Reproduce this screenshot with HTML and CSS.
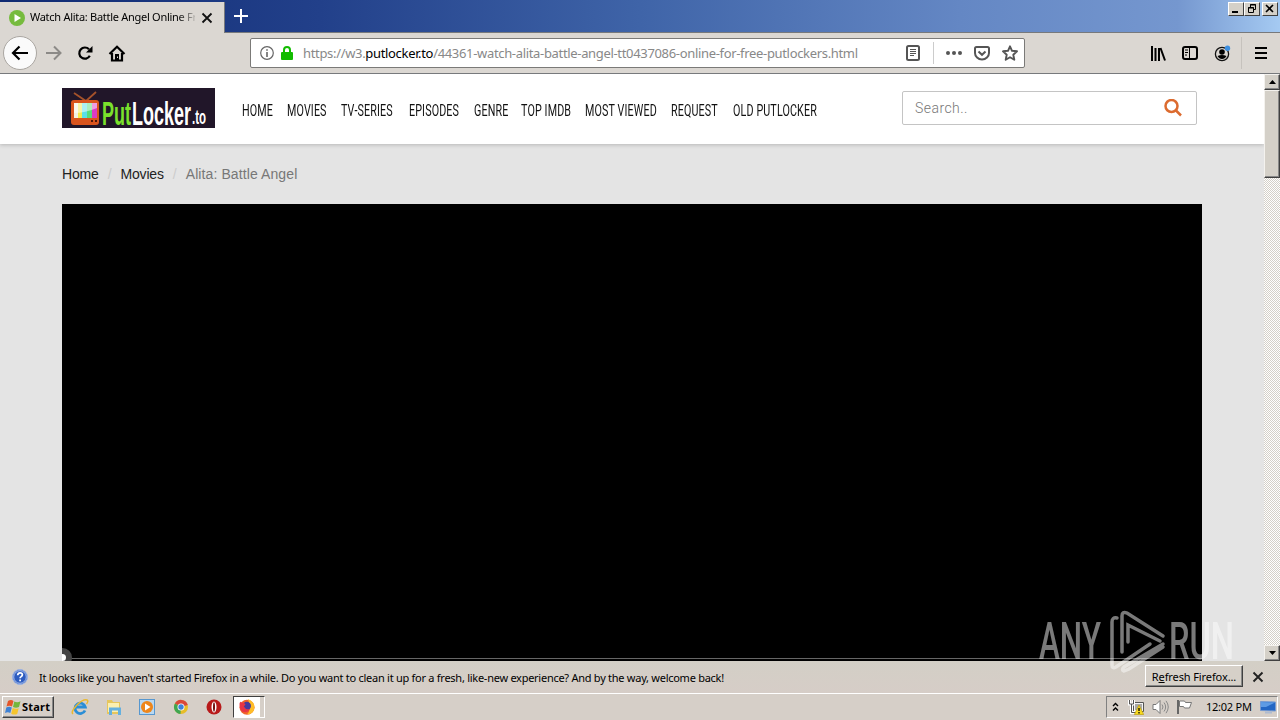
FILE: index.html
```html
<!DOCTYPE html>
<html lang="en">
<head>
	<meta charset="UTF-8">
	<title>Watch Alita: Battle Angel Online Free</title>
	<link rel="stylesheet" href="styles.css">
</head>
<body>
	<div class="titlebar">
		<div class="tab">
			<svg class="favicon" width="16" height="16" viewBox="0 0 16 16"><circle cx="8" cy="8" r="8" fill="#76bb3d"/><path d="M5.5 4l6.5 4-6.5 4z" fill="#fff"/></svg>
			<span class="tab_title">Watch Alita: Battle Angel Online Fr</span>
			<svg width="12" height="12" viewBox="0 0 12 12"><path d="M1.5 1.5l9 9M10.5 1.5l-9 9" stroke="#111" stroke-width="1.8"/></svg>
		</div>
		<svg class="new_tab" width="14" height="14" viewBox="0 0 14 14"><path d="M7 0v14M0 7h14" stroke="#fff" stroke-width="2"/></svg>
		<div class="win_btns">
			<div class="win_btn"><svg width="13" height="11" viewBox="0 0 13 11"><path d="M3 9h6" stroke="#000" stroke-width="2"/></svg></div>
			<div class="win_btn"><svg width="13" height="11" viewBox="0 0 13 11"><path d="M5.500 4V1.500h5v5H9M5 2h6M3.500 4.500h5v5h-5zM3 5h6" fill="none" stroke="#000"/></svg></div>
			<div class="win_btn close"><svg width="13" height="11" viewBox="0 0 13 11"><path d="M3 2l7 7M10 2l-7 7" stroke="#000" stroke-width="1.600"/></svg></div>
		</div>
	</div>

	<div class="toolbar">
		<div class="nav_btns">
			<div class="back"><svg width="18" height="16" viewBox="0 0 18 16"><path d="M17 8H2M8.500 1.500L2 8l6.500 6.500" fill="none" stroke="#000" stroke-width="2.200"/></svg></div>
			<svg width="17" height="16" viewBox="0 0 17 16"><path d="M1 8h14M9 1.500L15.500 8 9 14.500" fill="none" stroke="#8c8a87" stroke-width="2"/></svg>
			<svg width="16" height="16" viewBox="0 0 16 16"><path d="M12.800 10.800A5.600 5.600 0 1 1 12 4.300" fill="none" stroke="#000" stroke-width="2.200"/><path d="M15.500 1v6.500H9z"/></svg>
			<svg width="18" height="17" viewBox="0 0 18 17"><path d="M1.500 9L9 1.800 16.500 9M4 8v7.500h10V8" fill="none" stroke="#000" stroke-width="2.200"/><path d="M7 9h4v7H7z"/><path d="M9 11.500h1V13H9z" fill="#dbd7d2"/></svg>
		</div>
		<div class="urlbar">
			<svg width="14" height="14" viewBox="0 0 14 14"><circle cx="7" cy="7" r="6.300" fill="none" stroke="#666" stroke-width="1.200"/><path d="M7 6v5M7 3.200v1.600" stroke="#666" stroke-width="1.600"/></svg>
			<svg class="lock" width="12" height="14" viewBox="0 0 12 14"><path d="M3 7V4a3 3 0 0 1 6 0v3" fill="none" stroke="#12bc00" stroke-width="2"/><rect y="6" width="12" height="8" rx="1" fill="#12bc00"/></svg>
			<div class="url">https://w3.<b>putlocker.to</b>/44361-watch-alita-battle-angel-tt0437086-online-for-free-putlockers.html</div>
			<svg class="reader" width="14" height="16" viewBox="0 0 14 16"><rect x="1" y="1" width="12" height="14" rx="1.500" fill="none" stroke="#555" stroke-width="2"/><path d="M4 4.500h6M4 6.500h6M4 8.500h6M4 10.500h4" stroke="#555"/></svg>
			<div class="url_line"></div>
			<svg class="dots" width="16" height="4" viewBox="0 0 16 4"><g fill="#555"><circle cx="2" cy="2" r="2"/><circle cx="8" cy="2" r="2"/><circle cx="14" cy="2" r="2"/></g></svg>
			<svg class="pocket" width="16" height="15" viewBox="0 0 16 15"><path d="M1 2.500Q1 1 2.500 1h11Q15 1 15 2.500V7a7 6.500 0 0 1-14 0z" fill="none" stroke="#555" stroke-width="2"/><path d="M4.500 5.500L8 8.800l3.500-3.300" fill="none" stroke="#555" stroke-width="2"/></svg>
			<svg class="star" width="16" height="16" viewBox="0 0 16 16"><path d="M8 1.300l2 4.500 5 .5-3.700 3.400 1 5L8 12.200l-4.300 2.500 1-5L1 6.300l5-.5z" fill="none" stroke="#555" stroke-width="1.900" stroke-linejoin="round"/></svg>
		</div>
		<div class="tools">
			<svg width="16" height="15" viewBox="0 0 16 15"><path d="M2 0v15M5.500 2v13M9 2v13M10.500 2L15 14.500" stroke="#000" stroke-width="2"/></svg>
			<svg width="16" height="14" viewBox="0 0 16 14"><rect x="1" y="1" width="14" height="12" rx="2" fill="none" stroke="#000" stroke-width="2"/><path d="M7.500 1v12M3 4h3M3 6.500h3M3 9h2" stroke="#000"/></svg>
			<svg width="17" height="17" viewBox="0 0 17 17"><circle cx="8" cy="9" r="6.600" fill="none" stroke="#111" stroke-width="1.300"/><circle cx="8" cy="7" r="2.800"/><path d="M3.500 11q4.500-2 9 0-1.500 3-4.500 3t-4.500-3z"/><circle cx="13.500" cy="3.300" r="2.700" fill="#3d8fe0"/></svg>
			<div class="tools_line"></div>
			<svg width="12" height="12" viewBox="0 0 12 12"><path d="M0 1h12M0 6h12M0 11h12" stroke="#000" stroke-width="2"/></svg>
		</div>
	</div>

	<div class="view">
		<div class="page">
			<div class="header">
				<svg class="logo" width="153" height="40" viewBox="0 0 153 40">
					<rect width="153" height="40" fill="#211629"/>
					<path d="M12 5l12 8L34 4" fill="none" stroke="#a5522a" stroke-width="1.800"/>
					<rect x="9" y="12" width="28" height="25" rx="3" fill="#d9541d"/>
					<path d="M12 15h4v15h-4z" fill="#f4efe0"/><path d="M16 15h4v15h-4z" fill="#f5e94e"/><path d="M20 15h5v15h-5z" fill="#59e0e6"/><path d="M25 15h5v15h-5z" fill="#58dc7a"/><path d="M30 15h5v15h-5z" fill="#dc3bc4"/>
					<path d="M12 15h23v5q-12 5-23 5z" fill="#fff" opacity=".5"/>
					<path d="M29 33h2M33 33h2" stroke="#4d160a" stroke-width="2"/>
					<text class="logo_text" x="40" y="37" font-size="34" textLength="29" lengthAdjust="spacingAndGlyphs" fill="#7be12c">Put</text>
					<text class="logo_text" x="70" y="37" font-size="34" textLength="59" lengthAdjust="spacingAndGlyphs" fill="#fff">Locker</text>
					<text class="logo_text" x="130" y="36" font-size="20" textLength="14" lengthAdjust="spacingAndGlyphs" fill="#fff">.to</text>
				</svg>
				<ul class="menu">
					<li>HOME</li>
					<li>MOVIES</li>
					<li>TV-SERIES</li>
					<li>EPISODES</li>
					<li>GENRE</li>
					<li>TOP IMDB</li>
					<li>MOST VIEWED</li>
					<li>REQUEST</li>
					<li>OLD PUTLOCKER</li>
				</ul>
				<div class="search">
					<span>Search..</span>
					<svg width="18" height="18" viewBox="0 0 18 18"><circle cx="7.500" cy="7" r="6" fill="none" stroke="#dc6b2f" stroke-width="2.500"/><path d="M11.500 11l5.500 5.500" stroke="#dc6b2f" stroke-width="2.500"/></svg>
				</div>
			</div>
			<div class="crumbs"><span>Home</span><i>/</i><span>Movies</span><i>/</i><span class="now">Alita: Battle Angel</span></div>
			<div class="player"><div class="progress"></div><div class="knob"></div></div>
		</div>
		<div class="scrollbar">
			<div class="scroll_btn"><svg width="7" height="4" viewBox="0 0 7 4"><path d="M0 4l3.500-4L7 4z"/></svg></div>
			<div class="thumb"></div>
			<div class="scroll_btn down"><svg width="7" height="4" viewBox="0 0 7 4"><path d="M0 0l3.500 4L7 0z"/></svg></div>
		</div>
	</div>

	<div class="notice">
		<svg width="16" height="16" viewBox="0 0 16 16"><circle cx="8" cy="8" r="7.500" fill="#2d5cc0" stroke="#9db4e4"/><circle cx="8" cy="8" r="6.300" fill="none" stroke="#dbe5fa" stroke-width=".7"/><path d="M5.700 6.200q.2-2.400 2.400-2.400t2.300 2q0 1.200-1.400 1.900-.9.400-.9 1.500M8.100 10.600v1.600" fill="none" stroke="#fff" stroke-width="1.700"/></svg>
		<span class="notice_text">It looks like you haven't started Firefox in a while. Do you want to clean it up for a fresh, like-new experience? And by the way, welcome back!</span>
		<div class="refresh"><span>R<u>e</u>fresh Firefox...</span></div>
		<svg class="notice_close" width="12" height="12" viewBox="0 0 12 12"><path d="M1.500 1.500l9 9M10.500 1.500l-9 9" stroke="#222" stroke-width="1.900"/></svg>
	</div>

	<div class="taskbar">
		<div class="start">
			<svg width="17" height="16" viewBox="0 0 17 16"><path d="M3 2q3-2 5.500 0L7 7.500q-2.500-1.500-5.500 0z" fill="#e5562a"/><path d="M9.300 2.500q3 1.600 6.200-.2L14 8q-3 1.400-6 0z" fill="#74b63c"/><path d="M1.300 8.500q3-1.500 5.500.1L5.300 14q-2.500-1.500-5.300 0z" fill="#3f82d5"/><path d="M7.700 9q3 1.500 6 .2L12.200 15q-3 1.300-6-.3z" fill="#f5c52c"/></svg>
			<span>Start</span>
		</div>
		<div class="quick">
			<svg width="18" height="18" viewBox="0 0 18 18"><path d="M14 12.500A5.200 5.200 0 1 1 14.300 9H5" fill="none" stroke="#2b8ed6" stroke-width="2.800"/><path d="M2 16Q-.5 14 5.500 7.500 12 1 16 2q1.800 1-.5 4" fill="none" stroke="#eab830" stroke-width="1.500"/></svg>
			<svg width="18" height="18" viewBox="0 0 18 18"><path d="M2 2h5l1 2h7v12H2z" fill="#e6c65c"/><path d="M3 5h11v9H3z" fill="#fbefb0"/><path d="M4 9.500h12V17h-3v-4.500H7V17H4z" fill="#64b0df"/></svg>
			<svg width="18" height="18" viewBox="0 0 18 18"><rect x="1.500" y="1.500" width="15" height="15" fill="#b9d8f1" stroke="#5797cf"/><circle cx="9" cy="9" r="6" fill="#ee861b"/><path d="M7 5.500l5.500 3.500L7 12.500z" fill="#fff"/></svg>
			<svg width="18" height="18" viewBox="0 0 18 18"><circle cx="9" cy="9" r="7" fill="#e7bd28"/><path d="M9 9L2.900 5.500A7 7 0 0 1 15.800 7z" fill="#d9483a"/><path d="M9 9L2.900 5.500A7 7 0 0 0 8.500 16z" fill="#40a651"/><circle cx="9" cy="9" r="3.500" fill="#fff"/><circle cx="9" cy="9" r="2.700" fill="#3c82db"/></svg>
			<svg width="18" height="18" viewBox="0 0 18 18"><circle cx="9" cy="9" r="7.500" fill="#b81a1a"/><ellipse cx="9" cy="9" rx="2.500" ry="5.500" fill="#fff"/><ellipse cx="9" cy="9" rx="1" ry="4.700" fill="#741010"/></svg>
		</div>
		<div class="task_on"><svg width="18" height="18" viewBox="0 0 18 18"><circle cx="9" cy="9.300" r="7.500" fill="#f0632b"/><path d="M10 1q7 3 6.500 9-1 6-7.500 6.500 5-5 1-15.500z" fill="#ffbd28"/><circle cx="8.800" cy="8" r="4.200" fill="#463a9d"/><path d="M1.600 5Q3 3 3.500 4.500 6 4 7.500 6.500L5.800 8.500q2 3.700 6.200 2.500-3 5-8 2.500Q1 10 1.600 5z" fill="#e73545"/></svg></div>
		<div class="tray">
			<svg width="7" height="10" viewBox="0 0 7 10"><path d="M1 4l2.500-2.500L6 4M1 8.500L3.500 6 6 8.500" fill="none" stroke="#000" stroke-width="1.400"/></svg>
			<svg class="net" width="16" height="16" viewBox="0 0 16 16"><path d="M5.500 3.500h10v9h-10z" fill="#f5f5f5" stroke="#555"/><path d="M7 5h7v6H7z" fill="#aaa"/><path d="M1.500 1v4h4V1M3.500 5v8.500h5" fill="none" stroke="#fff" stroke-width="3"/><path d="M1.500 1v4h4V1M3.500 5v8.500h5" fill="none" stroke="#555"/><path d="M11 6l4.700 9.500H6.300z" fill="#f7d920" stroke="#b39300" stroke-width=".6"/><path d="M11 9v3M11 13v1.500" stroke="#000" stroke-width="1.300"/></svg>
			<svg class="sound" width="17" height="16" viewBox="0 0 17 16"><path d="M1 5.500h3l4-4v13l-4-4H1z" fill="#fff" stroke="#777"/><path d="M10 5.500q2 2.500 0 5M12 3.500q3.300 4.500 0 9M14 1.800q4.500 6.200 0 12.400" fill="none" stroke="#888"/></svg>
			<svg class="flag" width="17" height="16" viewBox="0 0 17 16"><path d="M2 1v14" stroke="#666" stroke-width="2"/><path d="M3.500 2h5l1 1.500h6L13.500 9H8.500l-1-1.500h-4z" fill="#fff" stroke="#777"/></svg>
			<span class="clock">12:02 PM</span>
			<svg class="desk" width="16" height="14" viewBox="0 0 16 14"><path d="M.5 1.500l15 .5v9l-15-.5z" fill="#2467c4" stroke="#789bd0"/><path d="M1 2l14 .5-9 4.500H1z" fill="#5e9be4"/><path d="M5 12.500h7" stroke="#aebbd0" stroke-width="2"/></svg>
		</div>
	</div>

	<svg class="watermark" width="200" height="66" viewBox="0 0 200 66">
		<text class="mark_text" x="3" y="50" textLength="62" lengthAdjust="spacingAndGlyphs">ANY</text>
		<text class="mark_text" x="133" y="50" textLength="65" lengthAdjust="spacingAndGlyphs">RUN</text>
		<path d="M81 9q-5-1-5 4v43q0 4 4 2L114 35M86 43V7q0-5 5-3L127 27M92 33V16l32 16M127 35L88 58q-3 3 0 4l5-2L127 38" fill="none" stroke="#fff" stroke-width="3.500" stroke-linecap="round"/>
	</svg>
</body>
</html>
```
FILE: styles.css
```css
*{margin: 0; padding: 0; box-sizing: border-box;}
li{list-style: none;}
svg{display: block; flex: none;}
body{
	width: 1280px;
	height: 720px;
	overflow: hidden;
	display: flex;
	flex-direction: column;
	font: 11px "Noto Sans", sans-serif;
	color: #000;
	background: #d6cfc8;
	white-space: nowrap;
}
.titlebar{
	height: 33px;
	display: flex;
	background: linear-gradient(90deg, #0f2a72 0, #22408a 25%, #3f64a8 50%, #6487c4 75%, #7597cf 92%, #a5caf2 100%);
	border-bottom: 1px solid #77797c;
}
.tab{
	width: 225px;
	height: 31px;
	margin-top: 2px;
	padding: 0 11px 0 9px;
	display: flex;
	align-items: center;
	background: #dbd7d2;
	border-right: 1px solid #77797c;
}
.tab_title{
	flex: 1;
	margin: -2px 6px 0 5px;
	overflow: hidden;
	letter-spacing: -0.28px;
	-webkit-mask-image: linear-gradient(90deg, #000 148px, transparent 168px);
	mask-image: linear-gradient(90deg, #000 148px, transparent 168px);
}
.new_tab{
	margin: 9px 0 0 9px;
}
.win_btns{
	display: flex;
	margin: 2px 2px 0 auto;
}
.win_btn{
	width: 16px;
	height: 14px;
	background: #d4d0c8;
	border: 1px solid;
	border-color: #fff #404040 #404040 #fff;
}
.close{
	margin-left: 2px;
}
.toolbar{
	height: 41px;
	display: flex;
	align-items: center;
	background: #dbd7d2;
	border-bottom: 1px solid #77797c;
}
.nav_btns{
	width: 250px;
	padding-left: 3px;
	display: flex;
	align-items: center;
}
.back{
	width: 34px;
	height: 34px;
	margin-right: 8px;
	padding-left: 7px;
	display: flex;
	align-items: center;
	background: #fafafa;
	border: 1px solid #aaa6a1;
	border-radius: 50%;
}
.nav_btns > svg{
	margin-right: 15px;
}
.urlbar{
	width: 775px;
	height: 30px;
	padding: 0 6px 0 9px;
	display: flex;
	align-items: center;
	background: #fff;
	border: 1px solid #7b7a78;
	border-radius: 2px;
}
.lock{
	margin: 0 10px 0 7px;
}
.url{
	flex: 1;
	font-size: 13px;
	letter-spacing: -0.33px;
	color: #888;
}
.url b{
	font-weight: normal;
	color: #000;
}
.url_line{
	width: 1px;
	height: 22px;
	margin: 0 12px 0 13px;
	background: #ccc;
}
.pocket{
	margin: 0 12px;
}
.tools{
	margin-left: auto;
	padding-right: 13px;
	display: flex;
	align-items: center;
}
.tools > svg + svg{
	margin-left: 16px;
}
.tools_line{
	width: 1px;
	height: 32px;
	margin: 0 13px 0 10px;
	background: #c6c2bd;
}
.view{
	height: 587px;
	display: flex;
}
.page{
	width: 1264px;
	background: #e4e4e4;
	overflow: hidden;
}
.header{
	height: 70px;
	padding-left: 62px;
	display: flex;
	align-items: flex-start;
	background: #fff;
	box-shadow: 0 1px 4px rgba(0,0,0,.2);
}
.logo{
	margin-top: 14px;
}
.logo_text{
	font-family: "Liberation Sans", sans-serif;
	font-weight: bold;
}
.menu{
	width: 687px;
	height: 20px;
	margin-top: 27px;
	padding-left: 27px;
	display: flex;
}
/* letters are squeezed, so every item gets its own slot */
.menu li{
	width: 45px;
	font: 16px/20px Roboto, sans-serif;
	letter-spacing: 0.2px;
	color: #111;
	transform: scaleX(.67);
	transform-origin: 0 0;
}
.menu li:nth-child(2){width: 54px;}
.menu li:nth-child(3){width: 68px;}
.menu li:nth-child(4){width: 65px;}
.menu li:nth-child(5){width: 47px;}
.menu li:nth-child(6){width: 64px;}
.menu li:nth-child(7){width: 86px;}
.menu li:nth-child(8){width: 62px;}
.search{
	width: 295px;
	height: 34px;
	margin-top: 17px;
	padding: 0 14px 0 12px;
	display: flex;
	align-items: center;
	justify-content: space-between;
	border: 1px solid #c4c4c4;
	border-radius: 2px;
	font: 300 14px Roboto, sans-serif;
	letter-spacing: 0.45px;
	color: #777;
}
.crumbs{
	height: 60px;
	padding-left: 62px;
	font: 14px/60px "Liberation Sans", sans-serif;
	letter-spacing: -0.2px;
	color: #222;
}
.crumbs i{
	display: inline-block;
	width: 22px;
	text-align: center;
	font-style: normal;
	color: #ccc;
}
.crumbs .now{
	letter-spacing: 0.1px;
	color: #777;
}
.player{
	width: 1140px;
	height: 457px;
	margin-left: 62px;
	position: relative;
	overflow: hidden;
	background: #000;
}
.progress{
	position: absolute;
	left: 0;
	bottom: 2px;
	width: 100%;
	height: 1px;
	background: #666;
}
.knob{
	position: absolute;
	left: -9px;
	bottom: -6px;
	width: 19px;
	height: 19px;
	border: 6px solid #444;
	border-radius: 50%;
	background: #fff;
}
.scrollbar{
	width: 16px;
	display: flex;
	flex-direction: column;
	background: repeating-conic-gradient(#fff 0 25%, #d4d0c8 0 50%) 0 0 / 2px 2px;
}
.scroll_btn, .thumb{
	height: 16px;
	display: flex;
	align-items: center;
	justify-content: center;
	background: #d4d0c8;
	border: 1px solid;
	border-color: #f4f2ee #404040 #404040 #f4f2ee;
	box-shadow: inset -1px -1px #888;
}
.thumb{
	height: 88px;
}
.down{
	margin-top: auto;
}
.notice{
	height: 33px;
	padding: 0 16px 0 12px;
	display: flex;
	align-items: center;
	background: linear-gradient(#d3cfc6, #d6cdc7);
	border-bottom: 1px solid #fff;
}
.notice_text{
	margin-left: 11px;
	letter-spacing: -0.265px;
}
.refresh{
	width: 98px;
	height: 22px;
	margin: -2px 9px 0 auto;
	display: flex;
	align-items: center;
	justify-content: center;
	background: #d6d0c8;
	border: 1px solid;
	border-color: #fff #404040 #404040 #fff;
	box-shadow: inset -1px -1px #888;
	letter-spacing: -0.1px;
}
.taskbar{
	height: 26px;
	padding: 2px 2px 2px;
	display: flex;
	background: #d6cfc8;
}
.start{
	width: 52px;
	padding-left: 2px;
	display: flex;
	align-items: center;
	border: 1px solid;
	border-color: #fff #404040 #404040 #fff;
	box-shadow: inset -1px -1px #888;
	font: bold 11px "Noto Sans", sans-serif;
}
.start span{
	margin-top: -2px;
	letter-spacing: 0.2px;
}
.quick{
	margin-left: 17px;
	display: flex;
	gap: 15.5px;
	align-items: center;
}
.task_on{
	width: 32px;
	margin-left: 10px;
	padding-left: 4px;
	display: flex;
	align-items: center;
	background: linear-gradient(90deg, #fff 26px, #d6cfc8 26px);
	border: 1px solid;
	border-color: #404040 #fff #fff #404040;
}
.tray{
	width: 172px;
	margin-left: auto;
	padding-left: 5px;
	display: flex;
	align-items: center;
	border: 1px solid;
	border-color: #808080 #fff #fff #808080;
}
.net{margin-left: 9px;}
.sound{margin-left: 8px;}
.flag{margin-left: 7px;}
.clock{
	width: 46px;
	margin: -1px 0 0 13px;
	letter-spacing: -0.25px;
}
.desk{margin-left: 8px;}
/* lies over the player and the notice bar */
.watermark{
	position: absolute;
	left: 1036px;
	top: 609px;
	opacity: .48;
}
.mark_text{
	font: 500 51px Roboto, sans-serif;
	fill: #fff;
}
```
